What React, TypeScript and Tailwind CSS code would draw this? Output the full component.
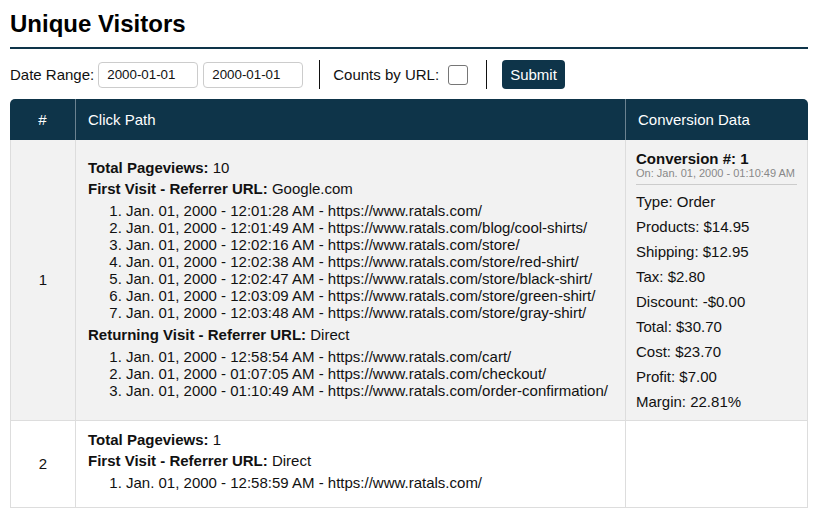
import React from 'react';

type Visit = { label: string; referrer: string; hits: { time: string; url: string }[] };
type Row = { id: number; pageviews: number; visits: Visit[]; conversion?: Conversion };
type Conversion = { num: number; on: string; lines: string[] };

const rows: Row[] = [
  {
    id: 1,
    pageviews: 10,
    visits: [
      {
        label: 'First Visit',
        referrer: 'Google.com',
        hits: [
          { time: '12:01:28 AM', url: 'https://www.ratals.com/' },
          { time: '12:01:49 AM', url: 'https://www.ratals.com/blog/cool-shirts/' },
          { time: '12:02:16 AM', url: 'https://www.ratals.com/store/' },
          { time: '12:02:38 AM', url: 'https://www.ratals.com/store/red-shirt/' },
          { time: '12:02:47 AM', url: 'https://www.ratals.com/store/black-shirt/' },
          { time: '12:03:09 AM', url: 'https://www.ratals.com/store/green-shirt/' },
          { time: '12:03:48 AM', url: 'https://www.ratals.com/store/gray-shirt/' },
        ],
      },
      {
        label: 'Returning Visit',
        referrer: 'Direct',
        hits: [
          { time: '12:58:54 AM', url: 'https://www.ratals.com/cart/' },
          { time: '01:07:05 AM', url: 'https://www.ratals.com/checkout/' },
          { time: '01:10:49 AM', url: 'https://www.ratals.com/order-confirmation/' },
        ],
      },
    ],
    conversion: {
      num: 1,
      on: 'Jan. 01, 2000 - 01:10:49 AM',
      lines: [
        'Type: Order',
        'Products: $14.95',
        'Shipping: $12.95',
        'Tax: $2.80',
        'Discount: -$0.00',
        'Total: $30.70',
        'Cost: $23.70',
        'Profit: $7.00',
        'Margin: 22.81%',
      ],
    },
  },
  {
    id: 2,
    pageviews: 1,
    visits: [
      {
        label: 'First Visit',
        referrer: 'Direct',
        hits: [{ time: '12:58:59 AM', url: 'https://www.ratals.com/' }],
      },
    ],
  },
];

export default function App() {
  const [from, setFrom] = React.useState('2000-01-01');
  const [to, setTo] = React.useState('2000-01-01');
  const [byUrl, setByUrl] = React.useState(false);

  return (
    <div className="p-[10px] text-[15px] leading-[17px] text-[#111] font-['Liberation_Sans',Arial,sans-serif] bg-white min-h-screen">
      <h1 className="text-[24px] leading-[27px] font-bold text-black">Unique Visitors</h1>
      <div className="mt-[10px] h-[2px] bg-[#0e3449]" />

      {/* Filters */}
      <div className="mt-[11px] flex items-center h-[29px]">
        <span>Date Range:</span>
        <input
          value={from}
          onChange={(e) => setFrom(e.target.value)}
          className="ml-[4px] w-[100px] h-[26px] px-[8px] text-[13.33px] border border-[#ccc] rounded-[4px] outline-none"
        />
        <input
          value={to}
          onChange={(e) => setTo(e.target.value)}
          className="ml-[5px] w-[100px] h-[26px] px-[8px] text-[13.33px] border border-[#ccc] rounded-[4px] outline-none"
        />
        <div className="ml-[16px] w-px h-[29px] bg-[#111]" />
        <span className="ml-[13px]">Counts by URL:</span>
        <button
          onClick={() => setByUrl(!byUrl)}
          className="ml-[9px] w-[20px] h-[20px] border border-[#767676] rounded-[3px] bg-white flex items-center justify-center"
        >
          {byUrl && <span className="w-[10px] h-[10px] bg-[#0e3449]" />}
        </button>
        <div className="ml-[18px] w-px h-[29px] bg-[#111]" />
        <button className="ml-[15px] h-[29px] px-[8px] bg-[#0e3449] text-white rounded-[4px]">Submit</button>
      </div>

      {/* Results */}
      <table className="mt-[10px] w-[798px] table-fixed border-separate border-spacing-0">
        <colgroup>
          <col className="w-[65px]" />
          <col className="w-[550px]" />
          <col className="w-[183px]" />
        </colgroup>
        <thead>
          <tr className="bg-[#0e3449] text-white">
            <th className="h-[41px] font-normal text-center rounded-tl-[5px]">#</th>
            <th className="h-[41px] font-normal text-left px-3 border-l border-[#6b8290]">Click Path</th>
            <th className="h-[41px] font-normal text-left px-3 border-l border-[#6b8290] rounded-tr-[5px]">Conversion Data</th>
          </tr>
        </thead>
        <tbody>
          {rows.map((row, i) => (
            <tr key={row.id} className={i % 2 === 0 ? 'bg-[#f2f2f2]' : 'bg-white'}>
              <td className="text-center align-middle border-l border-b border-[#ddd]">{row.id}</td>
              <td className="px-3 pt-[10px] pb-[11px] align-middle border-l border-b border-[#ddd]">
                <div className={row.conversion ? 'mt-[4px]' : ''}>
                  <p className="mb-1">
                    <b>Total Pageviews:</b> {row.pageviews}
                  </p>
                  {row.visits.map((v) => (
                    <div key={v.label}>
                      <p className="mb-[5px]">
                        <b>{v.label} - Referrer URL:</b> {v.referrer}
                      </p>
                      <ol className="list-decimal pl-[38px] mb-[5px]">
                        {v.hits.map((h) => (
                          <li key={h.time}>
                            Jan. 01, 2000 - {h.time} - {h.url}
                          </li>
                        ))}
                      </ol>
                    </div>
                  ))}
                </div>
              </td>
              <td className="px-[10px] py-[10px] align-top border-l border-r border-b border-[#ddd]">
                {row.conversion && (
                  <div>
                    <div className="font-bold">Conversion #: {row.conversion.num}</div>
                    <div className="text-[11px] leading-[12.5px] text-[#888] pb-1 border-b border-[#ccc]">
                      On: {row.conversion.on}
                    </div>
                    {row.conversion.lines.map((line) => (
                      <div key={line} className="mt-2">
                        {line}
                      </div>
                    ))}
                  </div>
                )}
              </td>
            </tr>
          ))}
        </tbody>
      </table>
    </div>
  );
}
